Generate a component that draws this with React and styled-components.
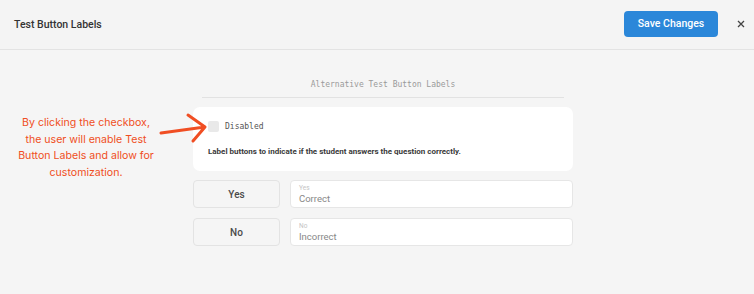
import styled, { createGlobalStyle } from "styled-components";
import React from "react";

const GlobalStyle = createGlobalStyle`
  html, body {
    margin: 0;
    padding: 0;
    background: #f5f5f5;
    font-family: Roboto, "Liberation Sans", sans-serif;
  }
`;

const Page = styled.div`
  position: relative;
  width: 754px;
  height: 294px;
  background: #f5f5f5;
  overflow: hidden;
`;

const Header = styled.div`
  height: 50px;
  box-sizing: border-box;
  border-bottom: 1px solid #e3e3e3;
  display: flex;
  align-items: center;
  padding: 0 9px 0 14px;
  background: #f4f4f4;
`;

const Title = styled.div`
  flex: 1;
  font-size: 10.5px;
  font-weight: 500;
  color: #333;
`;

const SaveButton = styled.button`
  width: 94px;
  height: 26px;
  border: none;
  border-radius: 4px;
  background: #2b87d9;
  color: #fff;
  font-family: Roboto, "Liberation Sans", sans-serif;
  font-size: 10.5px;
  font-weight: 500;
  margin-top: -2px;
  margin-right: 19px;
`;

const CloseButton = styled.div`
  width: 8px;
  height: 8px;
  display: flex;
  margin-top: -2px;
`;

const Body = styled.div`
  padding: 29px 181px 0 193px;
  display: flex;
  flex-direction: column;
`;

const SectionLabel = styled.div`
  font-family: "DejaVu Sans Mono", "Liberation Mono", monospace;
  font-size: 8px;
  color: #9a9a9a;
  text-align: center;
  line-height: 12px;
  padding-bottom: 6px;
  margin: 0 9px;
  border-bottom: 1px solid #e2e2e2;
`;

const Card = styled.div`
  margin-top: 9px;
  background: #fff;
  border-radius: 7px;
  height: 64px;
  box-sizing: border-box;
  padding: 14px 14px 0 15px;
`;

const CheckRow = styled.div`
  display: flex;
  align-items: center;
  gap: 6px;
`;

const Checkbox = styled.div`
  width: 11px;
  height: 11px;
  border-radius: 2px;
  background: #e9e9e9;
`;

const CheckText = styled.span`
  font-family: "DejaVu Sans Mono", "Liberation Mono", monospace;
  font-size: 8px;
  color: #555;
`;

const Description = styled.div`
  margin-top: 15px;
  font-size: 8px;
  font-weight: 700;
  color: #3a3a3a;
`;

const Rows = styled.div`
  margin-top: 9px;
  display: flex;
  flex-direction: column;
  gap: 10px;
`;

const Row = styled.div`
  display: flex;
  gap: 10px;
  height: 28px;
`;

const LabelButton = styled.div`
  width: 87px;
  box-sizing: border-box;
  border: 1px solid #e3e3e3;
  border-radius: 4px;
  background: #f5f5f5;
  display: flex;
  align-items: center;
  justify-content: center;
  font-size: 10px;
  font-weight: 500;
  color: #4a4a4a;
`;

const Field = styled.div`
  flex: 1;
  box-sizing: border-box;
  border: 1px solid #e6e6e6;
  border-radius: 4px;
  background: #fff;
  padding: 3px 8px 0;
  display: flex;
  flex-direction: column;
`;

const FieldHint = styled.span`
  font-size: 6.5px;
  color: #c4c4c4;
  line-height: 9px;
`;

const FieldValue = styled.span`
  font-size: 9.5px;
  color: #888;
  line-height: 12px;
`;

const Callout = styled.div`
  position: absolute;
  left: 6px;
  top: 115px;
  width: 160px;
  text-align: center;
  font-family: Inter, Roboto, sans-serif;
  font-size: 10.6px;
  line-height: 16.7px;
  color: #f04e23;
`;

const Arrow = styled.svg`
  position: absolute;
  left: 155px;
  top: 110px;
`;

const rows = [
  { label: "Yes", hint: "Yes", value: "Correct" },
  { label: "No", hint: "No", value: "Incorrect" },
];

function App() {
  return (
    <Page>
      <GlobalStyle />
      <Header>
        <Title>Test Button Labels</Title>
        <SaveButton>Save Changes</SaveButton>
        <CloseButton>
          <svg width="8" height="8" viewBox="0 0 8 8">
            <path d="M1 1L7 7M7 1L1 7" stroke="#444" strokeWidth="1.3" />
          </svg>
        </CloseButton>
      </Header>
      <Body>
        <SectionLabel>Alternative Test Button Labels</SectionLabel>
        <Card>
          <CheckRow>
            <Checkbox />
            <CheckText>Disabled</CheckText>
          </CheckRow>
          <Description>
            Label buttons to indicate if the student answers the question correctly.
          </Description>
        </Card>
        <Rows>
          {rows.map((r) => (
            <Row key={r.label}>
              <LabelButton>{r.label}</LabelButton>
              <Field>
                <FieldHint>{r.hint}</FieldHint>
                <FieldValue>{r.value}</FieldValue>
              </Field>
            </Row>
          ))}
        </Rows>
      </Body>
      <Callout>
        By clicking the checkbox,
        <br />
        the user will enable Test
        <br />
        Button Labels and allow for
        <br />
        customization.
      </Callout>
      <Arrow width="56" height="36" viewBox="0 0 56 36">
        <path
          d="M6 23L50 17M33 5L50 17L38 31"
          stroke="#f04e23"
          strokeWidth="3"
          fill="none"
          strokeLinecap="round"
          strokeLinejoin="round"
        />
      </Arrow>
    </Page>
  );
}

export default App;
